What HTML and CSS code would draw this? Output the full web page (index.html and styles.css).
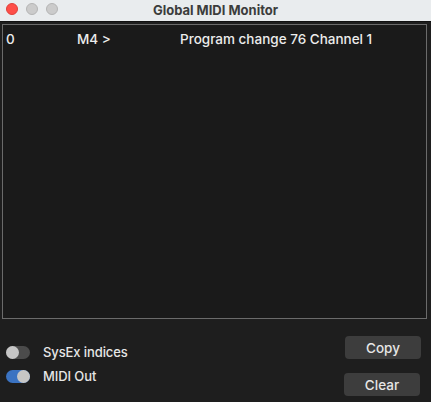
FILE: index.html
```html
<!DOCTYPE html>
<html lang="en">
<head>
    <meta charset="UTF-8">
    <meta name="viewport" content="width=device-width, initial-scale=1.0">
    <title>Global MIDI Monitor</title>
    <link rel="stylesheet" href="styles.css">
</head>
<body>
    <div class="window">
        <div class="titlebar">
            <div class="lights">
                <span class="light close"></span>
                <span class="light"></span>
                <span class="light"></span>
            </div>
            <div class="title">Global MIDI Monitor</div>
        </div>

        <div class="monitor">
            <div class="row">
                <span class="col-index">0</span>
                <span class="col-port">M4 &gt;</span>
                <span class="col-msg">Program change 76 Channel 1</span>
            </div>
        </div>

        <div class="footer">
            <div class="options">
                <label class="option">
                    <span class="toggle"><span class="knob"></span></span>
                    SysEx indices
                </label>
                <label class="option">
                    <span class="toggle on"><span class="knob"></span></span>
                    MIDI Out
                </label>
            </div>
            <div class="buttons">
                <button class="btn copy">Copy</button>
                <button class="btn clear">Clear</button>
            </div>
        </div>
    </div>
</body>
</html>
```

FILE: styles.css
```css
* {
    margin: 0;
    padding: 0;
    box-sizing: border-box;
}

body {
    font-family: Inter, "Noto Sans", sans-serif;
    background: #1e1e1e;
    width: 431px;
    height: 402px;
    overflow: hidden;
}

.window {
    width: 431px;
    height: 402px;
    background: #1e1e1e;
    display: flex;
    flex-direction: column;
}

.titlebar {
    height: 22px;
    background: #e9ecee;
    border-bottom: 1px solid #111;
    position: relative;
    display: flex;
    align-items: center;
    justify-content: center;
}

.lights {
    position: absolute;
    left: 6px;
    top: 3px;
    display: flex;
    gap: 8px;
}

.light {
    width: 12px;
    height: 12px;
    border-radius: 50%;
    background: #cbcbcb;
    border: 1px solid #b5b5b5;
}

.light.close {
    background: #fe4e48;
    border-color: #e0403a;
}

.title {
    font-size: 13px;
    font-weight: 700;
    color: #3c3c3c;
    margin-top: -2px;
}

.monitor {
    margin: 2px 4px 0 2px;
    height: 295px;
    border: 1px solid #6b6b6b;
    background: #1a1a1a;
}

.row {
    display: grid;
    grid-template-columns: 71px 103px 1fr;
    padding: 6px 3px;
    font-size: 13.5px;
    font-weight: 500;
    color: #ececec;
}

.footer {
    flex: 1;
    display: flex;
    justify-content: space-between;
    padding: 17px 10px 6px 6px;
}

.options {
    display: flex;
    flex-direction: column;
    gap: 8px;
    padding-top: 8px;
}

.option {
    display: flex;
    align-items: center;
    gap: 13px;
    font-size: 13px;
    color: #e6e6e6;
    font-weight: 500;
    letter-spacing: -0.1px;
}

.toggle {
    width: 24px;
    height: 13px;
    border-radius: 7px;
    background: #4b4b4b;
    display: flex;
    align-items: center;
}

.toggle.on {
    background: #3b73c2;
    justify-content: flex-end;
}

.knob {
    width: 13px;
    height: 13px;
    border-radius: 50%;
    background: #c6c6c6;
}

.buttons {
    display: flex;
    flex-direction: column;
    align-items: flex-end;
    gap: 14px;
}

.btn {
    width: 76px;
    height: 23px;
    border: none;
    border-radius: 4px;
    background: #3d3d3d;
    color: #e6e6e6;
    font-family: inherit;
    font-size: 13.5px;
    font-weight: 500;
}

.btn.clear {
    margin-right: 1px;
}
```
